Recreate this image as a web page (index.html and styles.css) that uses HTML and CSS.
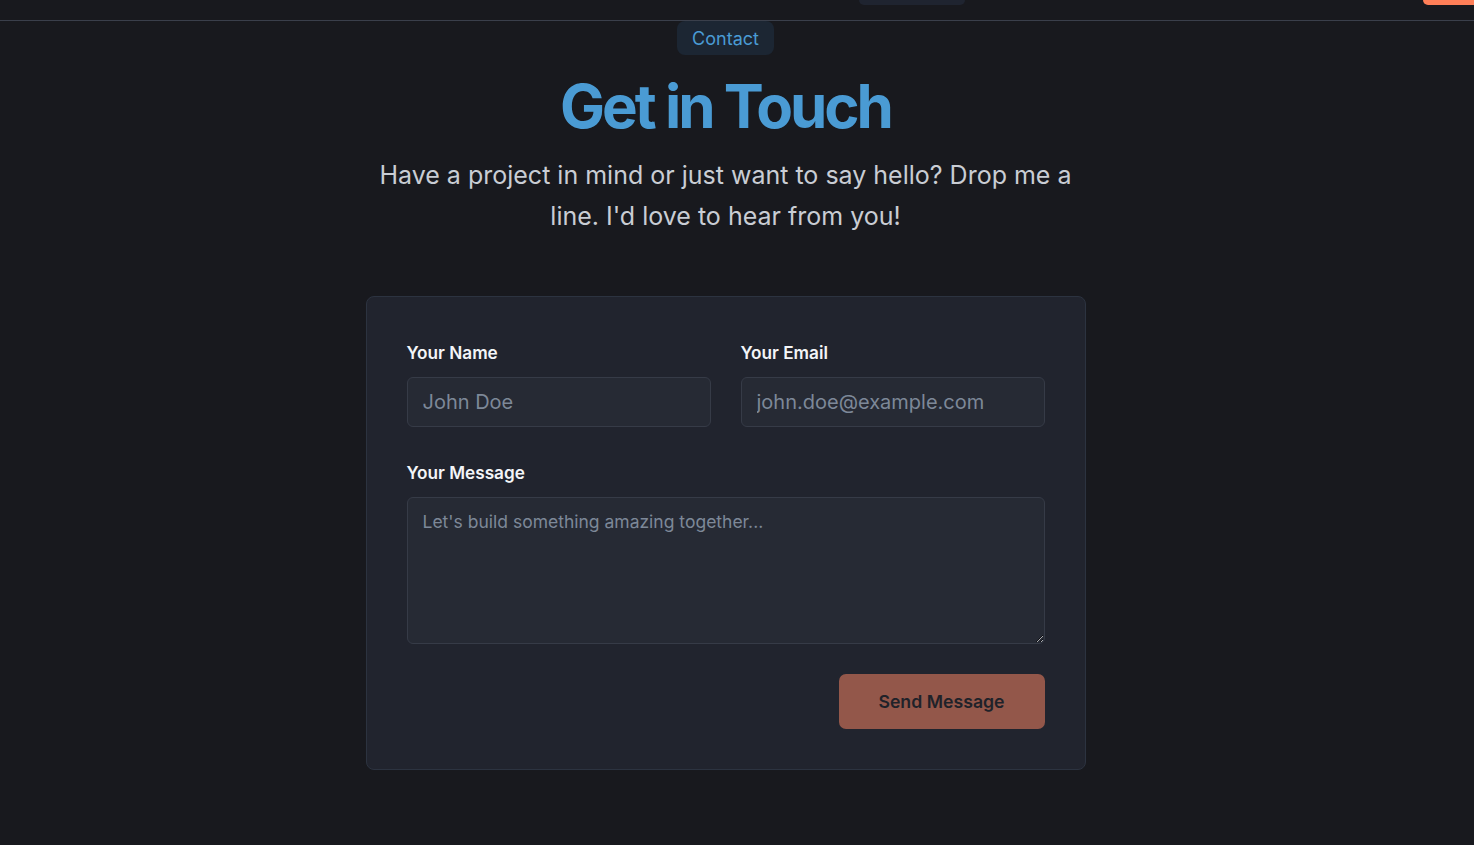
FILE: index.html
```html
<!DOCTYPE html>
<html lang="en">
<head>
<meta charset="utf-8">
<title>Contact</title>
<link rel="stylesheet" href="styles.css">
</head>
<body>
<header class="topbar">
  <div class="topbar-spacer"></div>
  <div class="nav-pill"></div>
  <div class="topbar-fill"></div>
  <div class="cta-pill"></div>
</header>
<main class="contact">
  <span class="badge">Contact</span>
  <h1 class="title">Get in Touch</h1>
  <p class="lead">Have a project in mind or just want to say hello? Drop me a line. I'd love to hear from you!</p>
  <form class="card">
    <div class="row">
      <div class="field">
        <label class="label" for="name">Your Name</label>
        <input class="input" id="name" type="text" placeholder="John Doe">
      </div>
      <div class="field">
        <label class="label" for="email">Your Email</label>
        <input class="input" id="email" type="email" placeholder="john.doe@example.com">
      </div>
    </div>
    <div class="field">
      <label class="label" for="msg">Your Message</label>
      <textarea class="textarea" id="msg" placeholder="Let's build something amazing together..."></textarea>
    </div>
    <div class="actions">
      <button class="send" type="button">Send Message</button>
    </div>
  </form>
</main>
</body>
</html>
```
FILE: styles.css
```css
* { box-sizing: border-box; }
html, body { margin: 0; padding: 0; }
body {
  background: #18191e;
  font-family: Inter, "Noto Sans", sans-serif;
  color: #e6e8ec;
  height: 845px;
  overflow: hidden;
}
.topbar {
  display: flex;
  align-items: flex-start;
  height: 21px;
  border-bottom: 1px solid #3a3f4b;
}
.topbar-spacer { width: 859px; }
.nav-pill {
  width: 106px;
  height: 5px;
  background: #1f2430;
  border-radius: 0 0 6px 6px;
}
.topbar-fill { flex: 1; }
.cta-pill {
  width: 51px;
  height: 5px;
  background: #ff7f58;
  border-radius: 0 0 0 6px;
}
.contact {
  display: flex;
  flex-direction: column;
  align-items: center;
  padding-right: 23px;
}
.badge {
  height: 34px;
  padding: 0 15px;
  display: flex;
  align-items: center;
  background: #1c2633;
  color: #4a9bd4;
  font-size: 18px;
  border-radius: 8px;
}
.title {
  margin: 19px 0 0;
  font-size: 60px;
  line-height: 64px;
  font-weight: 700;
  letter-spacing: -0.05em;
  color: #4a9bd4;
}
.lead {
  margin: 17px 0 0;
  max-width: 720px;
  text-align: center;
  font-size: 25px;
  line-height: 41px;
  color: #c9cdd4;
}
.card {
  margin-top: 59px;
  width: 720px;
  padding: 44px 40px 40px;
  background: #21242e;
  border: 1px solid #2c3340;
  border-radius: 8px;
  display: flex;
  flex-direction: column;
  gap: 34px;
}
.row {
  display: grid;
  grid-template-columns: minmax(0, 1fr) minmax(0, 1fr);
  gap: 30px;
}
.field {
  display: flex;
  flex-direction: column;
  gap: 12px;
  min-width: 0;
}
.label {
  font-size: 17.2px;
  line-height: 24px;
  font-weight: 600;
  color: #f3f5f8;
}
.input, .textarea {
  width: 100%;
  font-family: Inter, "Noto Sans", sans-serif;
  background: #262a34;
  border: 1px solid #363b47;
  border-radius: 6px;
  color: #e6e8ec;
  outline: none;
}
.input {
  height: 50px;
  padding: 0 15px;
  font-size: 20px;
}
.textarea {
  height: 147px;
  padding: 12px 15px;
  font-size: 17.5px;
  line-height: 24px;
  resize: vertical;
}
.input::placeholder, .textarea::placeholder { color: #7d8898; }
.actions {
  display: flex;
  justify-content: flex-end;
  margin-top: -4px;
}
.send {
  width: 206px;
  height: 55px;
  border: none;
  border-radius: 7px;
  background: #93574a;
  color: #1f2229;
  font-family: Inter, "Noto Sans", sans-serif;
  font-size: 17.7px;
  font-weight: 600;
}
```
